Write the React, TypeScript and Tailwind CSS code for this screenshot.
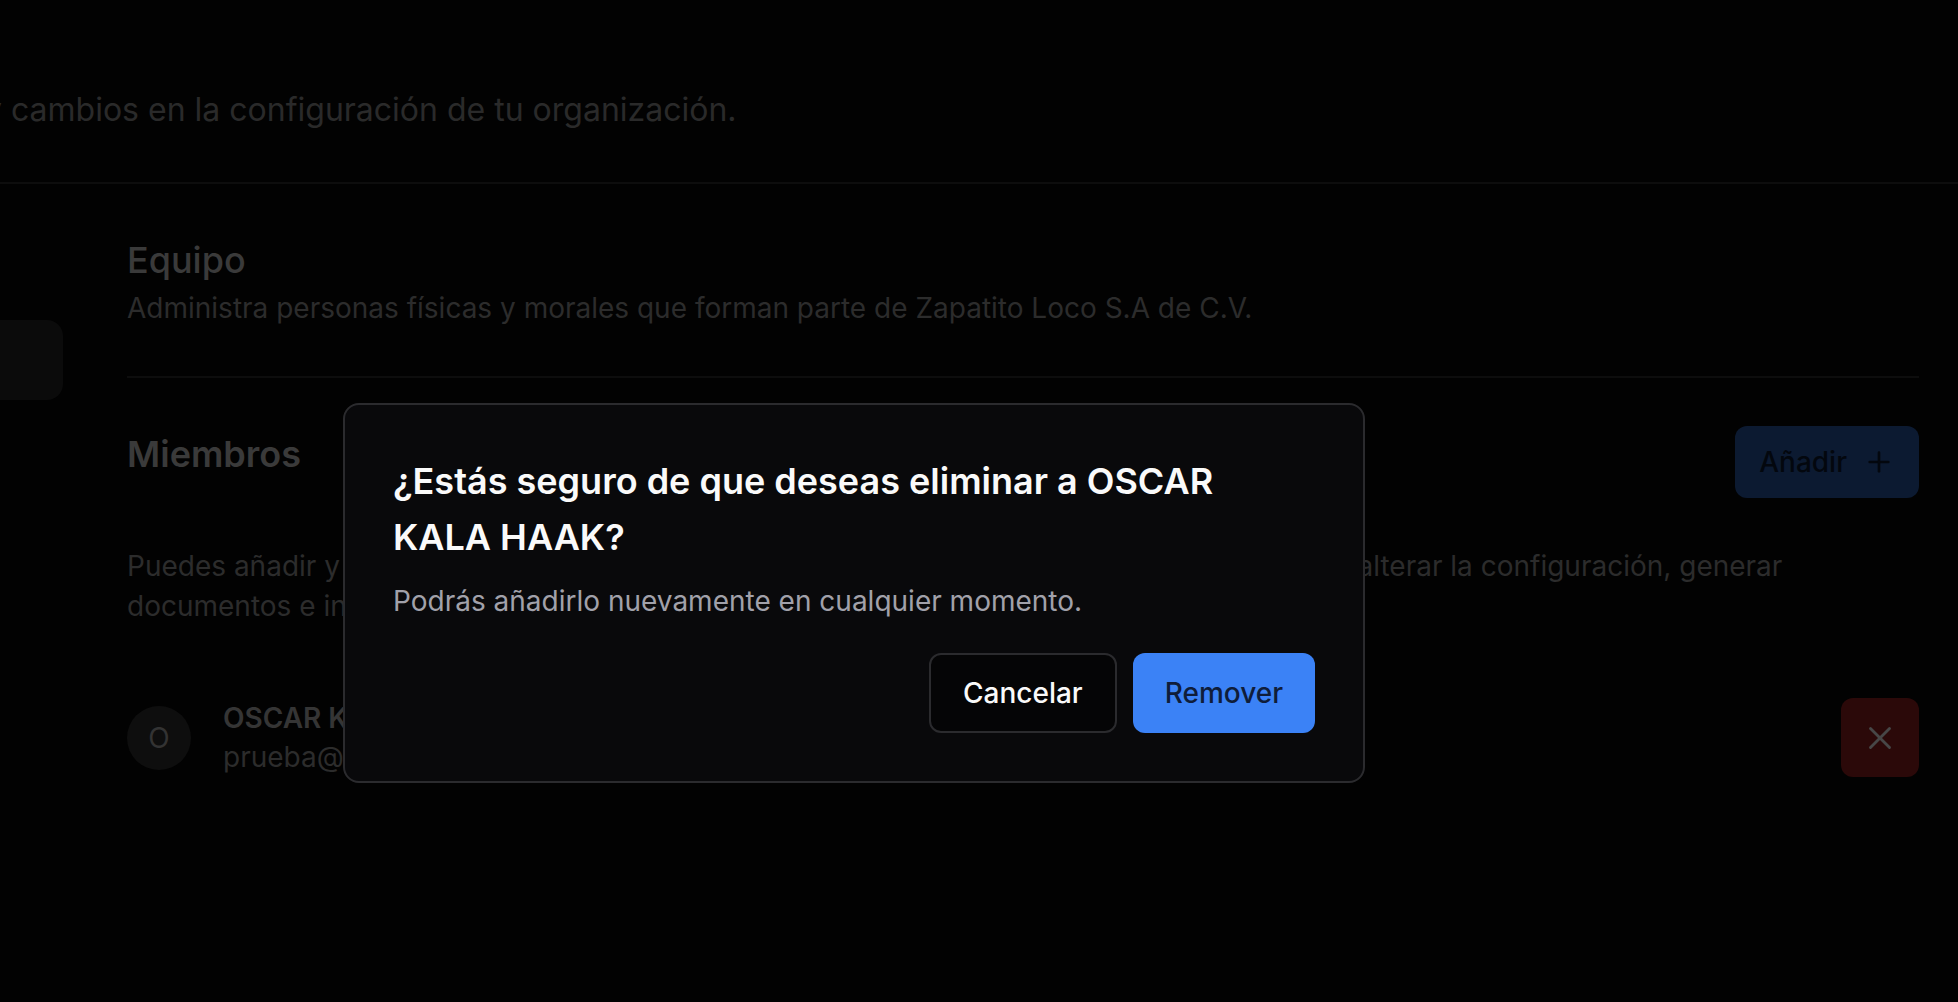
import { Plus, X } from "lucide-react";

export default function App() {
  return (
    <div className="relative h-screen w-full overflow-hidden bg-[#020202] font-['Inter',sans-serif]">
      <header className="border-b-2 border-[#0d0d0d] pt-[86px] pb-[48px]">
        <p className="-ml-[16px] whitespace-nowrap text-[32px] leading-[48px] text-[#2a2a2a]">
          y cambios en la configuración de tu organización.
        </p>
      </header>

      <div className="flex">
        <aside className="w-[63px] shrink-0 pt-[136px]">
          <div className="h-[80px] rounded-r-[16px] bg-[#0b0b0b]" />
        </aside>

        <main className="flex-1 pl-[64px] pr-[39px] pt-[48px]">
          <h2 className="text-[36px] font-medium leading-[56px] text-[#3a3a3a]">Equipo</h2>
          <p className="text-[28px] leading-[40px] text-[#2c2c2c]">
            Administra personas físicas y morales que forman parte de Zapatito Loco S.A de C.V.
          </p>

          <div className="mt-[48px] h-[2px] bg-[#0d0d0d]" />

          <div className="mt-[48px] flex items-start justify-between">
            <h3 className="text-[36px] font-semibold leading-[56px] text-[#3a3a3a]">Miembros</h3>
            <button className="flex h-[72px] items-center gap-[16px] rounded-[12px] bg-[#0c1a31] px-[24px] text-[28px] font-medium text-[#03070e]">
              Añadir
              <Plus size={32} strokeWidth={2} />
            </button>
          </div>

          <p className="mt-[48px] whitespace-nowrap text-[28px] leading-[40px] text-[#2c2c2c]">
            Puedes añadir y eliminar miembros de tu equipo. Los miembros tienen permisos totales para alterar la configuración, generar
            <br />
            documentos e invitar a otros usuarios.
          </p>

          <div className="mt-[72px] flex items-center justify-between">
            <div className="flex items-center gap-[32px]">
              <div className="flex h-[64px] w-[64px] items-center justify-center rounded-full bg-[#0e0e0e] text-[28px] text-[#333333]">
                O
              </div>
              <div className="text-[28px] leading-[39px]">
                <div className="font-semibold text-[#353535]">OSCAR KALA HAAK</div>
                <div className="text-[#2c2c2c]">prueba@gmail.com</div>
              </div>
            </div>
            <button className="flex h-[79px] w-[78px] items-center justify-center rounded-[12px] bg-[#2b0909] text-[#474747]">
              <X size={38} strokeWidth={1.8} />
            </button>
          </div>
        </main>
      </div>

      <div className="absolute left-[343px] top-[403px] w-[1022px] rounded-[16px] border-2 border-[#2b2b2e] bg-[#09090b] p-[48px]">
        <h2 className="max-w-[880px] text-[36px] font-semibold leading-[56px] text-[#fafafa]">
          ¿Estás seguro de que deseas eliminar a OSCAR KALA HAAK?
        </h2>
        <p className="mt-[16px] text-[28px] leading-[40px] text-[#a1a1aa]">
          Podrás añadirlo nuevamente en cualquier momento.
        </p>
        <div className="mt-[32px] flex justify-end gap-[16px]">
          <button className="h-[80px] rounded-[12px] border-2 border-[#2b2b2e] bg-[#050506] px-[32px] text-[28px] font-medium text-[#fafafa]">
            Cancelar
          </button>
          <button className="h-[80px] rounded-[12px] bg-[#3b82f6] px-[32px] text-[28px] font-medium text-[#0f1d3a]">
            Remover
          </button>
        </div>
      </div>
    </div>
  );
}
